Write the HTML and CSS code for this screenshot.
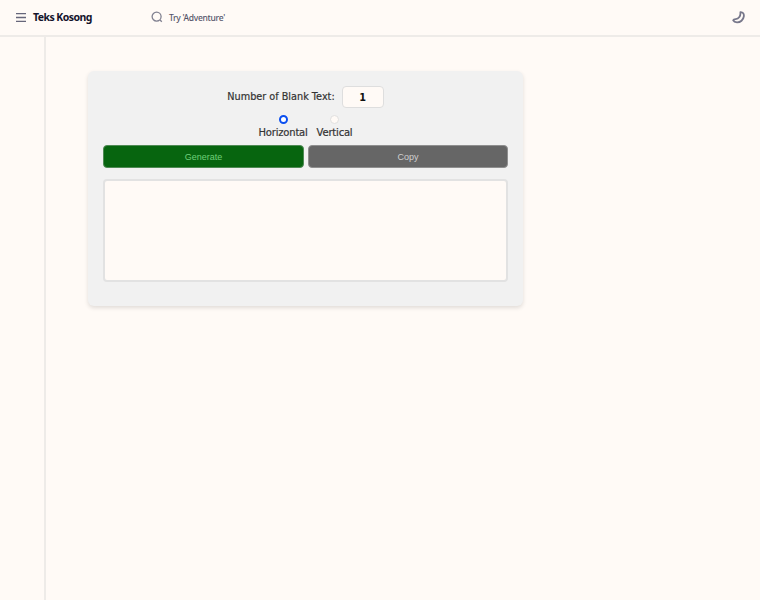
FILE: index.html
```html
<!DOCTYPE html>
<html lang="en">
<head>
<meta charset="utf-8">
<title>Teks Kosong</title>
<link rel="stylesheet" href="styles.css">
</head>
<body>
<header class="topbar">
  <div class="brand">
    <svg class="icon-menu" width="10" height="9" viewBox="0 0 10 9" aria-hidden="true"><path d="M0 .6h10M0 4.500h10M0 8.400h10" fill="none" stroke="#66667a" stroke-width="1.300"/></svg>
    <span class="brand-name">Teks Kosong</span>
  </div>
  <div class="search">
    <svg width="12" height="12" viewBox="0 0 12 12" aria-hidden="true"><circle cx="5.600" cy="5.600" r="4.500" fill="none" stroke="#808090" stroke-width="1.300"/><path d="M9 9l1.800 1.800" fill="none" stroke="#808090" stroke-width="1.300"/></svg>
    <span class="search-hint">Try 'Adventure'</span>
  </div>
  <svg class="icon-moon" width="13" height="13" viewBox="0 0 13 13" aria-hidden="true"><path d="M8.400 1.200C11 1 12.200 3 11.800 5.500 11.300 8.800 8.500 11.500 5 11.400 3.200 11.300 1.800 10.700 1.200 9.400 1.500 8.600 2.400 8.300 3.600 8.200 6.800 8 8.800 5 8.400 1.200Z" fill="none" stroke="#77778a" stroke-width="1.800" stroke-linejoin="round"/></svg>
</header>
<div class="layout">
  <aside class="rail"></aside>
  <main class="content">
    <section class="card">
      <div class="count-row">
        <label class="count-label" for="count">Number of Blank Text:</label>
        <input class="count-input" id="count" type="text" value="1">
      </div>
      <div class="radio-row">
        <label class="radio-item"><span class="radio radio-on"></span>Horizontal</label>
        <label class="radio-item"><span class="radio"></span>Vertical</label>
      </div>
      <div class="button-row">
        <button class="btn btn-generate" type="button">Generate</button>
        <button class="btn btn-copy" type="button">Copy</button>
      </div>
      <div class="output"></div>
    </section>
  </main>
</div>
</body>
</html>
```
FILE: styles.css
```css
* { box-sizing: border-box; }
html, body { height: 100%; }
body {
  margin: 0;
  background: #fffaf6;
  font-family: "Noto Sans", sans-serif;
  color: #1f1f2e;
  overflow: hidden;
}
.topbar {
  display: flex;
  align-items: center;
  height: 37px;
  padding: 0 15px 1px 16px;
  border-bottom: 2px solid #eeebe8;
}
.brand {
  display: flex;
  align-items: center;
  gap: 7px;
  width: 135px;
}
.brand-name {
  font-size: 10.500px;
  font-weight: 700;
  letter-spacing: -.55px;
  color: #14142b;
}
.search {
  display: flex;
  align-items: center;
  gap: 6px;
  flex: 1;
}
.search-hint {
  font-size: 8.500px;
  font-weight: 500;
  letter-spacing: -.3px;
  color: #55556a;
}
.layout {
  display: flex;
  height: 563px;
}
.rail {
  width: 46px;
  border-right: 2px solid #eeebe8;
}
.content {
  padding: 34px 0 0 42px;
}
.card {
  width: 435px;
  height: 235px;
  padding: 15px;
  background: #f1f1f1;
  border-radius: 6px;
  box-shadow: 0 2px 4px rgba(0, 0, 0, .12);
  font-family: "DejaVu Sans", sans-serif;
  color: #333;
}
.count-row {
  display: flex;
  justify-content: center;
  align-items: center;
  gap: 7px;
  height: 22px;
}
.count-label {
  position: relative;
  top: -1px;
  font-size: 9.700px;
  -webkit-text-stroke: .2px #333;
}
.count-input {
  width: 42px;
  height: 22px;
  padding: 0;
  background: #fffaf6;
  border: 1px solid #dedede;
  border-radius: 4px;
  text-align: center;
  font: 700 9.700px "DejaVu Sans", sans-serif;
  color: #111;
}
.radio-row {
  display: flex;
  justify-content: center;
  gap: 9px;
  margin-top: 7px;
}
.radio-item {
  display: flex;
  flex-direction: column;
  align-items: center;
  font-size: 10px;
  letter-spacing: -.2px;
  line-height: 13px;
  -webkit-text-stroke: .2px #333;
}
.radio {
  flex: none;
  width: 9px;
  height: 9px;
  margin-bottom: 2px;
  border-radius: 50%;
  background: #fffaf6;
  border: 1px solid #e0e0e0;
}
.radio-on {
  background: #fff;
  border: 2.500px solid #0b4ff0;
}
.button-row {
  display: flex;
  gap: 4px;
  margin-top: 6px;
}
.btn {
  height: 23px;
  padding: 0;
  border-radius: 4px;
  font: 9px "Liberation Sans", sans-serif;
}
.btn-generate {
  width: 201px;
  background: #07650f;
  border: 1px solid #4f8a54;
  color: #6fd07a;
}
.btn-copy {
  flex: 1;
  background: #666;
  border: 1px solid #8f8f8f;
  color: #d0d0d0;
}
.output {
  height: 103px;
  margin-top: 11px;
  background: #fffaf6;
  border: 2px solid #e2e2e2;
  border-radius: 4px;
}
```
